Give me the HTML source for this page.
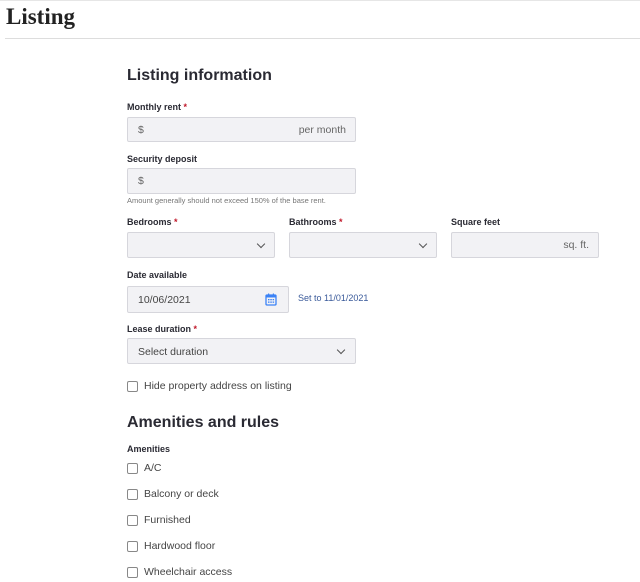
<!DOCTYPE html>
<html><head><style>
body{margin:0;width:640px;height:582px;overflow:hidden;background:#fff;font-family:"Liberation Sans",sans-serif;color:#333;position:relative}
.a{position:absolute}
h1{position:absolute;left:6px;top:4px;margin:0;font:bold 23px "Liberation Serif",serif;color:#222}
.hr{left:5px;top:38px;width:635px;height:1px;background:#ddd}
.top{left:0;top:0;width:640px;height:1px;background:#e6e6e6}
.h2{font-weight:bold;font-size:16px;color:#2a2a33}
.lb{font-weight:bold;font-size:9px;color:#2a2a33}
.lb i{color:#c0182a;font-style:normal}
.in{background:#f2f2f5;border:1px solid #d6d6dc;border-radius:2px;box-sizing:border-box;font-size:10.5px;color:#666}
.cb{width:11px;height:11px;border:1px solid #888;border-radius:2px;box-sizing:border-box}
.ct{font-size:10.5px;color:#444}
.chev{position:absolute;width:5px;height:5px;border-right:1.4px solid #555;border-bottom:1.4px solid #555;transform:rotate(45deg)}
</style></head><body>
<div class="a top"></div>
<h1>Listing</h1>
<div class="a hr"></div>
<div class="a h2" style="left:127px;top:67px">Listing information</div>
<div class="a lb" style="left:127px;top:102px">Monthly rent <i>*</i></div>
<div class="a in" style="left:127px;top:117px;width:229px;height:25px"><span class="a" style="left:10px;top:6px">$</span><span class="a" style="right:9px;top:6px">per month</span></div>
<div class="a lb" style="left:127px;top:154px">Security deposit</div>
<div class="a in" style="left:127px;top:168px;width:229px;height:26px"><span class="a" style="left:10px;top:6px">$</span></div>
<div class="a" style="left:127px;top:196px;font-size:7.5px;color:#777">Amount generally should not exceed 150% of the base rent.</div>
<div class="a lb" style="left:127px;top:217px">Bedrooms <i>*</i></div>
<div class="a lb" style="left:289px;top:217px">Bathrooms <i>*</i></div>
<div class="a lb" style="left:451px;top:217px">Square feet</div>
<div class="a in" style="left:127px;top:232px;width:148px;height:26px"><span class="chev" style="left:130px;top:8px"></span></div>
<div class="a in" style="left:289px;top:232px;width:148px;height:26px"><span class="chev" style="left:130px;top:8px"></span></div>
<div class="a in" style="left:451px;top:232px;width:148px;height:26px"><span class="a" style="right:9px;top:6px">sq. ft.</span></div>
<div class="a lb" style="left:127px;top:270px">Date available</div>
<div class="a in" style="left:127px;top:286px;width:162px;height:27px;color:#444"><span class="a" style="left:10px;top:7px">10/06/2021</span>
<svg class="a" style="left:137px;top:6px" width="12" height="13" viewBox="0 0 12 13"><rect x="1" y="2" width="10" height="10" rx="1" fill="none" stroke="#3b82f6" stroke-width="1.3"/><rect x="1" y="2" width="10" height="2.5" fill="#3b82f6"/><rect x="3" y="0.5" width="1.2" height="2.5" fill="#3b82f6"/><rect x="7.8" y="0.5" width="1.2" height="2.5" fill="#3b82f6"/><g fill="#3b82f6"><rect x="3" y="6" width="1.5" height="1.3"/><rect x="5.3" y="6" width="1.5" height="1.3"/><rect x="7.6" y="6" width="1.5" height="1.3"/><rect x="3" y="8.5" width="1.5" height="1.3"/><rect x="5.3" y="8.5" width="1.5" height="1.3"/><rect x="7.6" y="8.5" width="1.5" height="1.3"/></g></svg></div>
<div class="a" style="left:298px;top:293px;font-size:9px;color:#3a5a9a">Set to 11/01/2021</div>
<div class="a lb" style="left:127px;top:324px">Lease duration <i>*</i></div>
<div class="a in" style="left:127px;top:338px;width:229px;height:26px;color:#444"><span class="a" style="left:10px;top:7px">Select duration</span><span class="chev" style="left:210px;top:8px"></span></div>
<div class="a cb" style="left:127px;top:381px"></div>
<div class="a ct" style="left:144px;top:380px">Hide property address on listing</div>
<div class="a h2" style="left:127px;top:414px">Amenities and rules</div>
<div class="a lb" style="left:127px;top:444px">Amenities</div>
<div class="a cb" style="left:127px;top:463px"></div><div class="a ct" style="left:144px;top:462px">A/C</div>
<div class="a cb" style="left:127px;top:489px"></div><div class="a ct" style="left:144px;top:488px">Balcony or deck</div>
<div class="a cb" style="left:127px;top:515px"></div><div class="a ct" style="left:144px;top:514px">Furnished</div>
<div class="a cb" style="left:127px;top:541px"></div><div class="a ct" style="left:144px;top:540px">Hardwood floor</div>
<div class="a cb" style="left:127px;top:567px"></div><div class="a ct" style="left:144px;top:566px">Wheelchair access</div>
</body></html>
